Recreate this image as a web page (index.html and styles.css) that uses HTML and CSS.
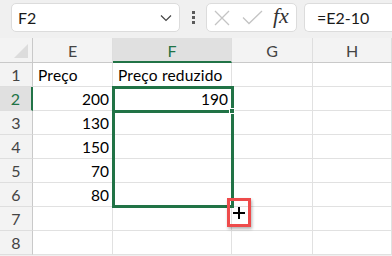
FILE: index.html
```html
<!DOCTYPE html>
<html>
<head>
<meta charset="utf-8">
<link rel="stylesheet" href="styles.css">
</head>
<body>
<div class="app">
  <div class="toolbar">
    <div class="namebox">
      <span class="name">F2</span>
      <svg class="chev" width="12" height="8" viewBox="0 0 12 8"><path d="M1 1.5 L6 6.5 L11 1.5" fill="none" stroke="#444" stroke-width="1.2"/></svg>
    </div>
    <div class="dots"><i></i><i></i><i></i></div>
    <div class="fxgroup">
      <svg width="16" height="16" viewBox="0 0 16 16"><path d="M1 1 L15 15 M15 1 L1 15" stroke="#c4c4c4" stroke-width="1.3" fill="none"/></svg>
      <svg width="21" height="15" viewBox="0 0 21 15"><path d="M1 7.5 L7 13.5 L20 1" stroke="#c4c4c4" stroke-width="1.3" fill="none"/></svg>
      <span class="fx">fx</span>
    </div>
    <div class="formula">=E2-10</div>
  </div>
  <div class="sheet">
    <div class="corner"><span class="tri"></span></div>
    <div class="ch">E</div>
    <div class="ch sel">F</div>
    <div class="ch">G</div>
    <div class="ch">H</div>

    <div class="rh">1</div><div class="c">Preço</div><div class="c">Preço reduzido</div><div class="c"></div><div class="c"></div>
    <div class="rh sel">2</div><div class="c num">200</div><div class="c num">190</div><div class="c"></div><div class="c"></div>
    <div class="rh">3</div><div class="c num">130</div><div class="c"></div><div class="c"></div><div class="c"></div>
    <div class="rh">4</div><div class="c num">150</div><div class="c"></div><div class="c"></div><div class="c"></div>
    <div class="rh">5</div><div class="c num">70</div><div class="c"></div><div class="c"></div><div class="c"></div>
    <div class="rh">6</div><div class="c num">80</div><div class="c"></div><div class="c"></div><div class="c"></div>
    <div class="rh">7</div><div class="c"></div><div class="c"></div><div class="c"></div><div class="c"></div>
    <div class="rh">8</div><div class="c"></div><div class="c"></div><div class="c"></div><div class="c"></div>

    <div class="range"></div>
    <div class="active"></div>
    <div class="handle"></div>
    <div class="cursor"><span class="plus"></span></div>
  </div>
</div>
</body>
</html>
```

FILE: styles.css
```css
* { box-sizing: border-box; }
html, body { margin: 0; padding: 0; }
body {
  width: 392px;
  height: 256px;
  overflow: hidden;
  background: #f0f0f0;
  font-family: Lato, "Liberation Sans", sans-serif;
  color: #000;
}
.app { display: flex; flex-direction: column; }
.toolbar {
  height: 38px;
  display: flex;
  align-items: flex-start;
  padding: 3px 0 0 11px;
  background: #f0f0f0;
}
.namebox {
  width: 169px;
  height: 29px;
  background: #fff;
  border: 1px solid #dcdcdc;
  border-radius: 5px;
  display: flex;
  align-items: center;
  justify-content: space-between;
  padding: 0 7px 0 6px;
}
.name { font-size: 16px; color: #1a1a1a; }
.dots {
  width: 26px;
  height: 29px;
  display: flex;
  flex-direction: column;
  align-items: center;
  justify-content: center;
  gap: 2px;
}
.dots i { display: block; width: 3px; height: 3px; background: #5a5a5a; }
.fxgroup {
  width: 91px;
  height: 29px;
  background: #fff;
  border: 1px solid #dcdcdc;
  border-radius: 5px;
  display: flex;
  align-items: center;
  gap: 12px;
  padding-left: 7px;
}
.fx {
  font-family: "Liberation Serif", serif;
  font-style: italic;
  font-size: 22px;
  color: #333;
  margin-left: -2px;
  margin-top: -3px;
}
.formula {
  flex: 1;
  margin-left: 7px;
  height: 29px;
  background: #fff;
  border: 1px solid #dcdcdc;
  border-right: none;
  border-radius: 5px 0 0 5px;
  padding-left: 12px;
  font-size: 16px;
  line-height: 27px;
  color: #1a1a1a;
}
.sheet {
  position: relative;
  display: grid;
  grid-template-columns: 33px 80px 119px 81px 79px;
  grid-template-rows: 25px repeat(8, 24px);
  background: #fff;
  font-size: 15.5px;
}
.corner {
  background: #f3f3f3;
  border-right: 1px solid #c9c9c9;
  border-bottom: 1px solid #c9c9c9;
  position: relative;
}
.tri {
  position: absolute;
  right: 4px;
  bottom: 4px;
  width: 0;
  height: 0;
  border-left: 14px solid transparent;
  border-bottom: 14px solid #dcdcdc;
}
.ch {
  background: #f3f3f3;
  border-right: 1px solid #dedede;
  border-bottom: 1px solid #c9c9c9;
  display: flex;
  align-items: center;
  justify-content: center;
  color: #444;
  font-size: 16px;
  padding-top: 1px;
}
.ch.sel {
  background: #e0e0e0;
  color: #217346;
  border-bottom: 2px solid #217346;
}
.rh {
  background: #f3f3f3;
  border-right: 1px solid #c9c9c9;
  border-bottom: 1px solid #dedede;
  display: flex;
  align-items: center;
  justify-content: center;
  color: #444;
  font-size: 16px;
}
.rh.sel {
  background: #e0e0e0;
  color: #217346;
  border-right: 2px solid #217346;
}
.c {
  border-right: 1px solid #e1e1e1;
  border-bottom: 1px solid #e1e1e1;
  display: flex;
  align-items: center;
  padding: 1px 4px 0 5px;
  white-space: nowrap;
  letter-spacing: 0.2px;
}
.c.num { justify-content: flex-end; padding-right: 3px; letter-spacing: 0; }
.range {
  position: absolute;
  left: 112px;
  top: 48px;
  width: 122px;
  height: 122px;
  border: 3px solid #217346;
}
.active {
  position: absolute;
  left: 112px;
  top: 72px;
  width: 120px;
  height: 3px;
  background: #217346;
}
.handle {
  position: absolute;
  left: 229px;
  top: 70px;
  width: 6px;
  height: 6px;
  background: #217346;
  border: 1px solid #fff;
}
.cursor {
  position: absolute;
  left: 227px;
  top: 160px;
  width: 24px;
  height: 29px;
  border: 3px solid #ee4b4b;
  box-shadow: 1px 2px 3px rgba(0,0,0,0.3);
  display: flex;
  align-items: center;
  justify-content: center;
}
.plus {
  position: relative;
  width: 12px;
  height: 12px;
}
.plus::before, .plus::after {
  content: "";
  position: absolute;
  background: #000;
}
.plus::before { left: 0; top: 5px; width: 12px; height: 2px; }
.plus::after { left: 5px; top: 0; width: 2px; height: 12px; }
```
